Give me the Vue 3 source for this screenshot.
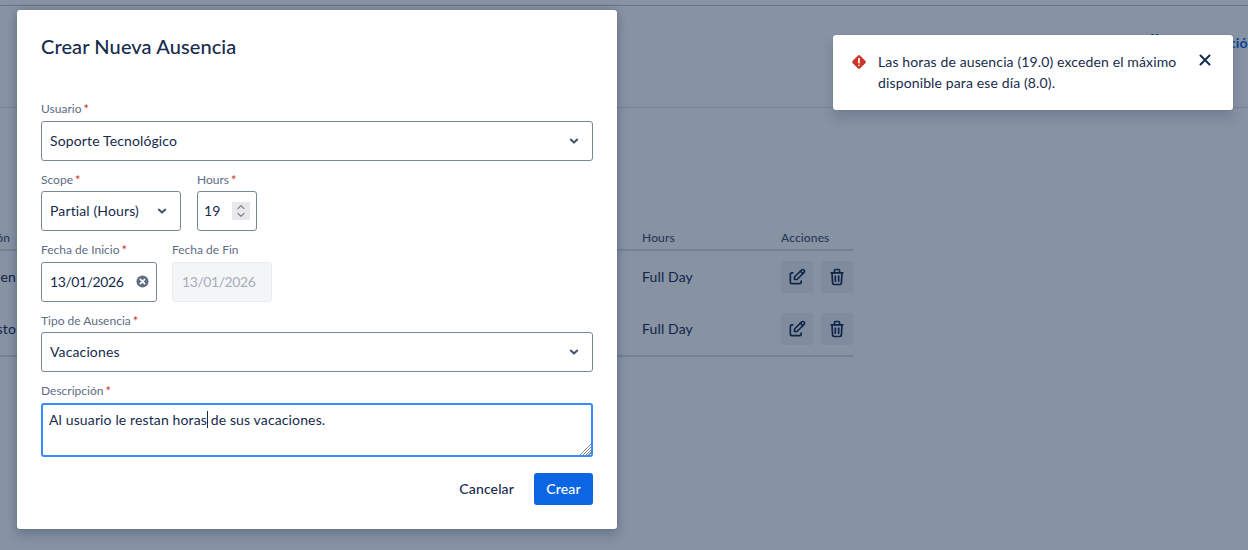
<script setup>
const rows = ['Orden', 'Imprevisto']
</script>

<template>
  <div class="root">
    <div class="page">
      <div class="topbar"></div>
      <div class="head">
        <a class="link"><span class="pre">ll</span> Configuración</a>
      </div>
      <div class="table">
        <div class="row hrow">
          <div class="c1"><span>Descripción</span></div>
          <div class="c2"></div>
          <div class="c3">Hours</div>
          <div class="c4">Acciones</div>
        </div>
        <div class="row brow" v-for="r in rows" :key="r">
          <div class="c1 bt"><span>{{ r }}</span></div>
          <div class="c2"></div>
          <div class="c3">Full Day</div>
          <div class="c4 acts">
            <span class="ib">
              <svg viewBox="0 0 24 24" width="20" height="20" fill="none" stroke="currentColor" stroke-width="2" stroke-linecap="round" stroke-linejoin="round"><path d="M7 7h-1a2 2 0 0 0 -2 2v9a2 2 0 0 0 2 2h9a2 2 0 0 0 2 -2v-1"/><path d="M20.385 6.585a2.1 2.1 0 0 0 -2.97 -2.97l-8.415 8.385v3h3l8.415 -8.415z"/><path d="M16 5l3 3"/></svg>
            </span>
            <span class="ib">
              <svg viewBox="0 0 24 24" width="20" height="20" fill="none" stroke="currentColor" stroke-width="2" stroke-linecap="round" stroke-linejoin="round"><path d="M5 7h14"/><path d="M10 11v6"/><path d="M14 11v6"/><path d="M6 7l.7 12a2 2 0 0 0 2 2h6.6a2 2 0 0 0 2 -2l.7 -12"/><path d="M9 7v-3a1 1 0 0 1 1 -1h4a1 1 0 0 1 1 1v3"/></svg>
            </span>
          </div>
        </div>
      </div>
    </div>

    <div class="overlay"></div>

    <section class="modal">
      <h1 class="title">Crear Nueva Ausencia</h1>
      <div class="form">
        <div class="field">
          <label>Usuario<i>*</i></label>
          <div class="ctl sel"><span>Soporte Tecnológico</span>
            <svg class="chev" viewBox="0 0 12 12" width="12" height="12"><path d="M2.8 4.6 6 7.6l3.2-3" fill="none" stroke="#44546f" stroke-width="2" stroke-linecap="round" stroke-linejoin="round"/></svg>
          </div>
        </div>
        <div class="inline">
          <div class="field w140">
            <label>Scope<i>*</i></label>
            <div class="ctl sel"><span>Partial (Hours)</span>
              <svg class="chev" viewBox="0 0 12 12" width="12" height="12"><path d="M2.8 4.6 6 7.6l3.2-3" fill="none" stroke="#44546f" stroke-width="2" stroke-linecap="round" stroke-linejoin="round"/></svg>
            </div>
          </div>
          <div class="field w60">
            <label>Hours<i>*</i></label>
            <div class="ctl num"><span>19</span>
              <span class="spin">
                <svg viewBox="0 0 18 26" width="18" height="26"><path d="M5 10l4-4 4 4M5 16l4 4 4-4" fill="none" stroke="#7a7a80" stroke-width="1.5" stroke-linecap="round" stroke-linejoin="round"/></svg>
              </span>
            </div>
          </div>
        </div>
        <div class="inline tight">
          <div class="field w116">
            <label>Fecha de Inicio<i>*</i></label>
            <div class="ctl date"><span>13/01/2026</span>
              <svg viewBox="0 0 14 14" width="13" height="13"><circle cx="7" cy="7" r="6.5" fill="#5e6c84"/><path d="M4.7 4.7l4.6 4.6M9.3 4.7L4.7 9.3" stroke="#fff" stroke-width="1.7" stroke-linecap="round"/></svg>
            </div>
          </div>
          <div class="field w100">
            <label>Fecha de Fin</label>
            <div class="ctl off"><span>13/01/2026</span></div>
          </div>
        </div>
        <div class="field">
          <label>Tipo de Ausencia<i>*</i></label>
          <div class="ctl sel"><span>Vacaciones</span>
            <svg class="chev" viewBox="0 0 12 12" width="12" height="12"><path d="M2.8 4.6 6 7.6l3.2-3" fill="none" stroke="#44546f" stroke-width="2" stroke-linecap="round" stroke-linejoin="round"/></svg>
          </div>
        </div>
        <div class="field">
          <label>Descripción<i>*</i></label>
          <div class="area">Al usuario le restan horas<span class="caret"></span> de sus vacaciones.</div>
        </div>
      </div>
      <div class="foot">
        <button class="cancel">Cancelar</button>
        <button class="create">Crear</button>
      </div>
    </section>

    <aside class="toast">
      <svg class="err" viewBox="0 0 24 24" width="20" height="20"><path fill="#c9372c" d="M13.416 4.417a2.002 2.002 0 0 0-2.832 0l-6.168 6.167a2.002 2.002 0 0 0 0 2.833l6.168 6.167a2.002 2.002 0 0 0 2.832 0l6.168-6.167a2.002 2.002 0 0 0 0-2.833l-6.168-6.167z"/><path fill="#fff" d="M12 14a1 1 0 0 1-1-1V8a1 1 0 0 1 2 0v5a1 1 0 0 1-1 1zm0 3a1 1 0 0 1 0-2 1 1 0 0 1 0 2z"/></svg>
      <p>Las horas de ausencia (19.0) exceden el máximo disponible para ese día (8.0).</p>
      <svg class="x" viewBox="0 0 14 14" width="14" height="14"><path d="M2.5 2.5l9 9M11.5 2.5l-9 9" stroke="#172b4d" stroke-width="2" stroke-linecap="round"/></svg>
    </aside>
  </div>
</template>

<style>
html, body { margin: 0; background: #fff; overflow: hidden; }
</style>

<style scoped>
.root {
  position: relative;
  width: 1248px;
  height: 550px;
  overflow: hidden;
  font-family: "Lato", "Noto Sans", sans-serif;
  font-size: 14px;
  letter-spacing: 0.13px;
  color: #172b4d;
  background: #fff;
}
.page { display: flex; flex-direction: column; }
.topbar { height: 5px; border-bottom: 1px solid #c1c7d0; }
.head {
  height: 75px;
  border-bottom: 1px solid #dcdfe4;
  padding: 26px 0 0 1150px;
  white-space: nowrap;
}
.link { color: #0c66e4; font-weight: 700; font-size: 14px; line-height: 18px; display: block; width: 98px; overflow: hidden; word-spacing: 4px; }
.pre { font-size: 18px; line-height: 18px; }
.table { margin-top: 120px; width: 853px; }
.row { display: grid; grid-template-columns: 17px 625px 139px 72px; align-items: center; }
.hrow { height: 19px; padding-bottom: 2px; border-bottom: 2px solid #dcdfe4; font-size: 12px; color: #44546f; font-weight: 500; }
.brow { height: 52px; }
.brow:last-child { border-bottom: 2px solid #dcdfe4; }
.brow .c3, .bt { padding-bottom: 2px; }
.c1 { display: flex; justify-content: flex-end; white-space: nowrap; }
.hrow .c1 { width: 10px; }
.bt { width: 16px; }
.acts { display: flex; gap: 8px; }
.ib { width: 32px; height: 32px; flex: none; display: flex; align-items: center; justify-content: center; background: #f1f2f4; border-radius: 3px; color: #172b4d; }
.overlay { position: absolute; inset: 0; background: rgba(9, 30, 66, 0.485); }

.modal {
  position: absolute;
  left: 17px;
  top: 10px;
  width: 600px;
  height: 519px;
  box-sizing: border-box;
  padding: 24px;
  background: #fff;
  border-radius: 3px;
  box-shadow: 0 8px 12px rgba(9, 30, 66, 0.15), 0 0 8px rgba(9, 30, 66, 0.2);
}
.title { margin: 0; font-size: 20px; font-weight: 500; line-height: 24px; height: 66.9px; letter-spacing: 0.1px; }
.form { display: flex; flex-direction: column; gap: 10.5px; }
.field { display: flex; flex-direction: column; }
label { box-sizing: border-box; height: 20px; padding-top: 0.2px; font-size: 12px; line-height: 16px; color: #5e6c84; letter-spacing: 0; }
label i { color: #c9372c; font-style: normal; font-size: 13px; line-height: 12px; margin-left: 2px; vertical-align: -1px; }
.inline { display: flex; gap: 16px; }
.inline.tight { gap: 15px; }
.w140 { width: 140px; }
.w60 { width: 60px; }
.w116 { width: 116px; }
.w100 { width: 100px; }
.ctl {
  box-sizing: border-box;
  height: 40px;
  display: flex;
  align-items: center;
  justify-content: space-between;
  padding: 0 8px;
  border: 1px solid #7a869a;
  border-radius: 3px;
  white-space: nowrap;
}
.ctl > span:first-child { padding-bottom: 1px; }
.sel { padding-right: 12px; }
.num { padding: 0 6px; }
.spin { display: flex; background: #e8e8ec; width: 18px; height: 18px; align-items: center; justify-content: center; overflow: hidden; }
.spin svg { width: 14px; height: 20px; }
.date { padding-right: 7px; }
.date span, .off span { letter-spacing: -0.42px; }
.off { background: #f4f5f7; border-color: #ebecf0; color: #a5adba; padding-left: 9px; }
.area {
  box-sizing: border-box;
  height: 54px;
  border: 2px solid #388bff;
  border-radius: 3px;
  padding: 5px 6px;
  line-height: 20px;
  resize: both;
  overflow: auto;
}
.area::-webkit-resizer {
  background:
    linear-gradient(to bottom right, #fff 62%, transparent 62%),
    repeating-linear-gradient(135deg, #fff 0 1px, #8a8a8a 1px 2px);
}
.caret { display: inline-block; width: 1px; height: 17px; background: #172b4d; vertical-align: -3px; margin-right: -1px; }
.foot { display: flex; justify-content: flex-end; align-items: center; gap: 8px; margin-top: 16px; }
button { font: inherit; letter-spacing: inherit; border: 0; border-radius: 3px; height: 32px; padding: 0 12px 1px; font-weight: 500; }
.cancel { background: transparent; color: #172b4d; }
.create { background: #0c66e4; color: #fff; width: 59px; padding: 0 0 1px; }

.toast {
  position: absolute;
  left: 833px;
  top: 35px;
  width: 400px;
  height: 75px;
  box-sizing: border-box;
  display: flex;
  align-items: flex-start;
  padding: 16px 20px 0 16px;
  background: #fff;
  border-radius: 3px;
  box-shadow: 0 8px 12px rgba(9, 30, 66, 0.15), 0 0 1px rgba(9, 30, 66, 0.3);
}
.toast p { margin: 0 0 0 9px; width: 302px; line-height: 21px; flex: none; }
.err { flex: none; margin-top: 1px; }
.x { flex: none; margin: 2px 0 0 18px; }
</style>
